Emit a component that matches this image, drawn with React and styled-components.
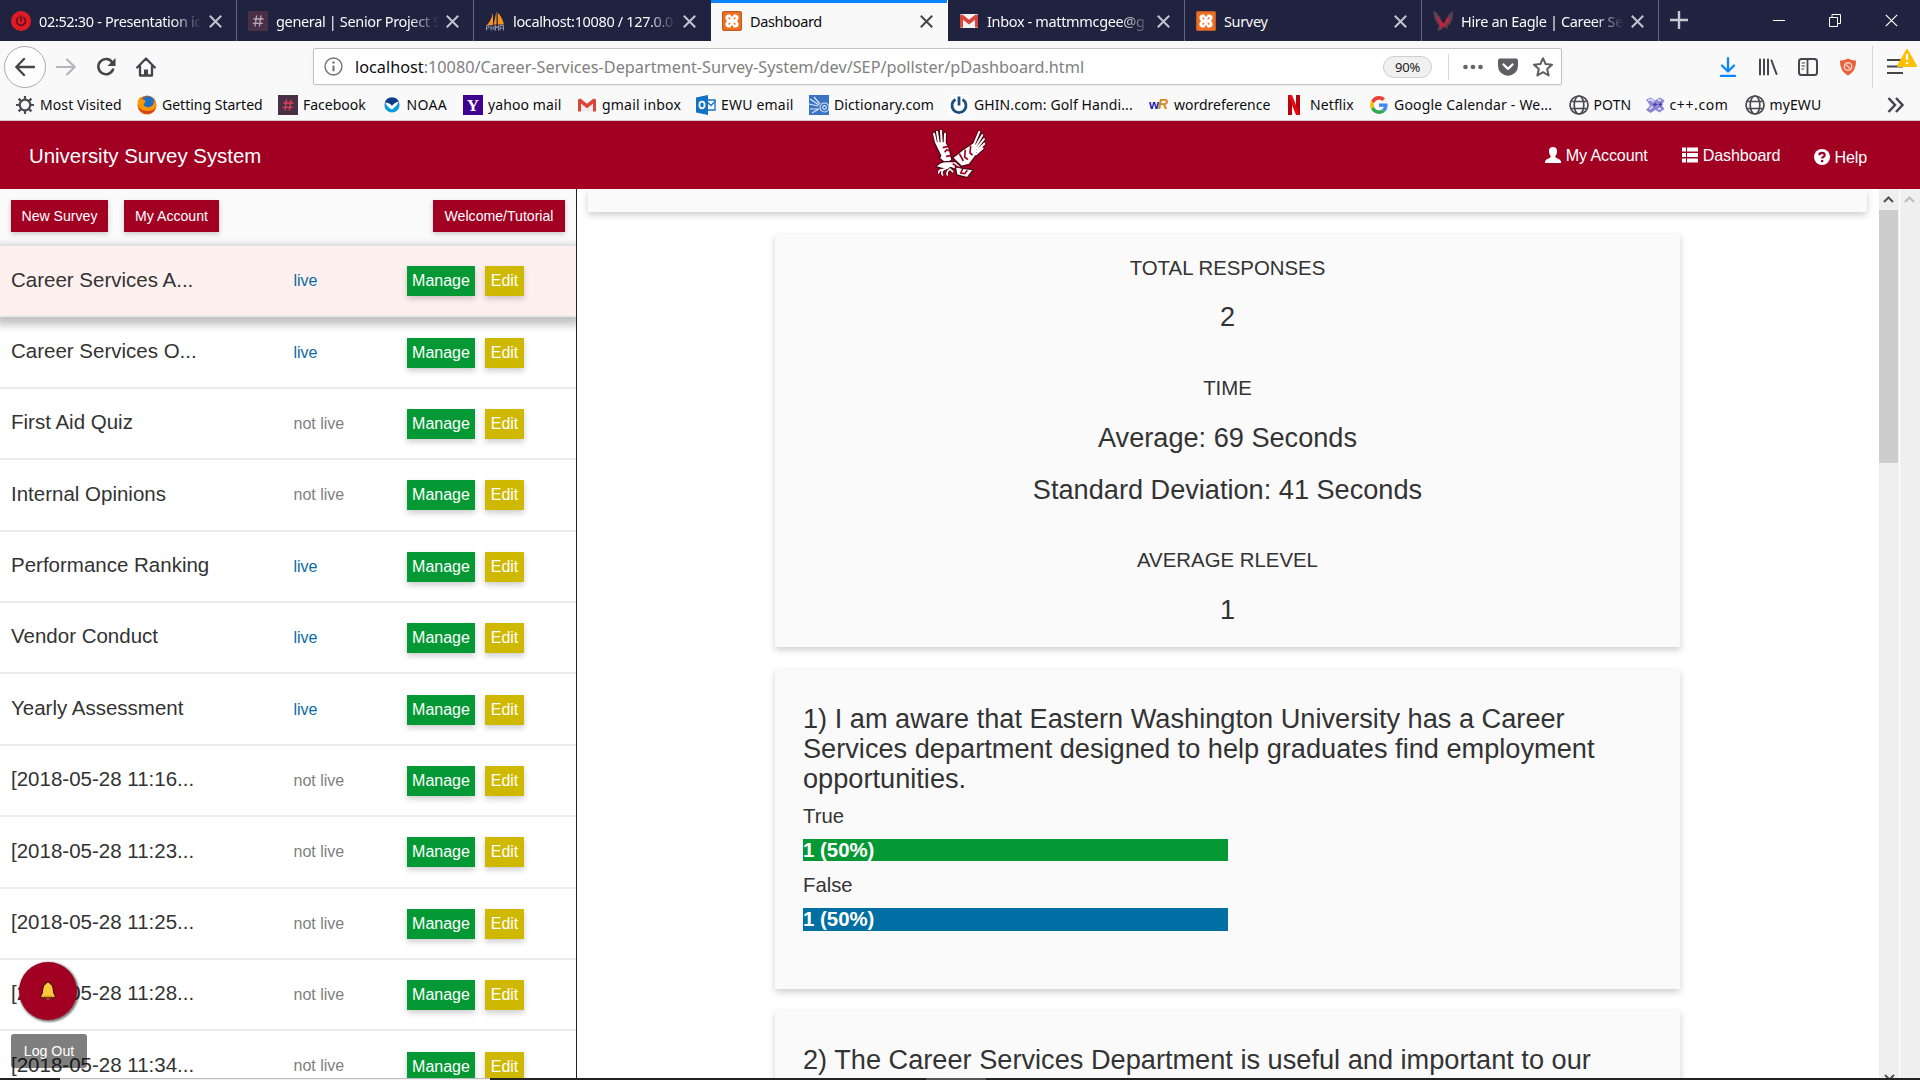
import React from 'react';
import styled, { createGlobalStyle, css } from 'styled-components';

const CRIMSON = '#a10022';
const arial = '"Liberation Sans", Arial, sans-serif';
const ui = '"Noto Sans", "Open Sans", sans-serif';

const Global = createGlobalStyle`
  *, *::before, *::after { box-sizing: border-box; }
  html, body { margin: 0; padding: 0; }
  body { width: 1920px; height: 1080px; overflow: hidden; background: #fff; font-family: ${arial}; color: #333; }
  svg { display: block; flex: none; }
`;

const Screen = styled.div`
  width: 1920px; height: 1080px; display: flex; flex-direction: column; overflow: hidden; background: #fff;
`;

/* ---------- browser chrome ---------- */
const TabStrip = styled.div`
  height: 41px; flex: none; display: flex; background: #202340; font-family: ${ui};
`;
const Tab = styled.div`
  width: 237px; flex: none; height: 41px; display: flex; align-items: center;
  padding: 1px 14px 0 11px;
  color: ${p => (p.$active ? '#0c0c0d' : '#f9f9fa')};
  background: ${p => (p.$active ? '#f9f9fa' : 'transparent')};
  ${p => p.$active && css`box-shadow: inset 0 3px 0 #0a84ff;`}
  border-right: 1px solid ${p => (p.$line ? '#63657a' : 'transparent')};
`;
const TabTitle = styled.div`
  flex: 1; margin-left: 8px; margin-right: 7px; font-size: 14.5px; line-height: 24px; overflow: hidden; white-space: nowrap;
  letter-spacing: -0.35px;
  ${p => p.$fade && css`mask-image: linear-gradient(to right, #000 82%, transparent 100%);`}
`;
const StripTools = styled.div`
  flex: 1; min-width: 0; display: flex; align-items: center; justify-content: space-between;
  padding: 0 22px 1px 11px; color: #fff;
`;
const WindowButtons = styled.div`display: flex; align-items: center; gap: 44px;`;
const Spacer = styled.div`flex: 1;`;
const NavBar = styled.div`
  height: 51px; flex: none; display: flex; align-items: center; padding: 0 5px 0 4px; background: #f9f9fa; font-family: ${ui};
`;
const BackButton = styled.div`
  width: 42px; height: 42px; border-radius: 50%; border: 1px solid #adadad; background: #fdfdfd;
  display: flex; align-items: center; justify-content: center; color: #45454a;
`;
const NavIcons = styled.div`
  display: flex; align-items: center; gap: 20px; margin-left: 10px; width: 257px;
`;
const UrlBar = styled.div`
  width: 1249px; height: 37px; display: flex; align-items: center; background: #fff;
  border: 1px solid #c3c3c3; border-radius: 2px; box-shadow: 0 1px 3px rgba(0,0,0,.06);
  padding: 0 8px 0 10px;
`;
const UrlText = styled.div`
  flex: 1; margin-left: 12px; font-size: 16.25px; line-height: 30px; color: #808080; white-space: nowrap;
  b { font-weight: 400; color: #0c0c0d; }
`;
const ZoomPill = styled.div`
  width: 49px; height: 22px; border-radius: 11px; border: 1px solid #cfcfcf; background: #f0f0f0; margin-right: 2px;
  font-size: 13px; line-height: 20px; text-align: center; color: #1c1c1e; letter-spacing: -0.2px;
`;
const VLine = styled.div`width: 1px; height: ${p => p.$h}px; background: #d7d7db; margin: 0 14px;`;
const UrlActions = styled.div`display: flex; align-items: center; gap: 15px;`;
const RightTools = styled.div`
  flex: 1; display: flex; align-items: center; justify-content: flex-end; color: #45454a;
`;
const ToolGroup = styled.div`display: flex; align-items: center; gap: 20px;`;
const MenuButton = styled.div`position: relative; width: 28px; height: 42px; display: flex; align-items: center;`;
const Warn = styled.svg`position: absolute; top: 3px; left: 10px;`;

const Bookmarks = styled.div`
  height: 29px; flex: none; display: flex; align-items: center; padding: 0 0 2px 15px; background: #f9f9fa;
  border-bottom: 1px solid #cfcfcf; font-family: ${ui};
`;
const Bookmark = styled.div`
  width: ${p => p.$w}px; flex: none; display: flex; align-items: center; gap: 5px; white-space: nowrap;
  font-size: 14px; line-height: 22px; color: #0c0c0d; letter-spacing: ${p => p.$ls || 0}px;
`;

/* ---------- page header ---------- */
const Header = styled.header`
  height: 68px; flex: none; background: ${CRIMSON}; color: #fff; display: grid; align-items: center;
  grid-template-columns: 1fr 60px 1fr; padding: 0 53px 0 29px;
`;
const Brand = styled.div`font-size: 20.4px; line-height: 24px; padding-top: 1px;`;
const Logo = styled.div`margin-left: 14px; margin-top: -3px;`;
const Links = styled.nav`
  display: flex; justify-content: flex-end; gap: 34px; font-size: 16.1px; line-height: 20px; letter-spacing: -0.12px;
`;
const Link = styled.div`
  display: flex; align-items: center; gap: ${p => (p.$low ? 4 : 5)}px; margin-top: ${p => (p.$low ? 3 : -1)}px;
`;

/* ---------- body ---------- */
const Body = styled.div`height: 889px; flex: none; display: flex; overflow: hidden;`;
const Side = styled.aside`width: 577px; flex: none; border-right: 1px solid #222; height: 100%; overflow: hidden;`;
const SideBar = styled.div`
  height: 57px; background: #fafafa; padding: 11px 11px 0; display: flex; align-items: flex-start;
`;
const RedButton = styled.button`
  height: 32px; width: ${p => p.$w}px; margin-right: ${p => p.$mr || 0}px; border: 0; padding: 0; background: ${CRIMSON}; color: #fff;
  font: 14.1px/32px ${arial}; white-space: nowrap;
  box-shadow: 0 2px 5px rgba(0,0,0,.2);
`;
const Row = styled.div`
  position: relative; height: 71.4px; display: grid; grid-template-columns: 282.5px 113.5px 78px 1fr; align-items: start;
  padding-left: 11px; border-bottom: 2px solid #ebebeb; background: ${p => (p.$active ? '#fff0f0' : '#fff')};
  ${p => p.$active && css`z-index: 1; box-shadow: 0 4px 8px 4px rgba(0,0,0,.24);`}
`;
const RowTitle = styled.div`font-size: 20.5px; line-height: 24px; margin-top: 21.5px;`;
const Status = styled.div`
  font-size: 16px; line-height: 20px; margin-top: 25.2px; color: ${p => (p.$live ? '#0b6ba3' : '#808080')};
`;
const Action = styled.button`
  height: 30px; width: ${p => p.$w}px; margin-top: 20.3px; border: 0; padding: 0; color: #fff; background: ${p => p.$bg};
  font: 16px/30px ${arial}; box-shadow: 0 3px 6px rgba(0,0,0,.2);
`;

const Main = styled.main`
  flex: 1; min-width: 0; display: flex; flex-direction: column; align-items: center; overflow: hidden; padding-right: 1px;
`;
const shadow = css`box-shadow: 0 3px 7px rgba(0,0,0,.2);`;
const Strip = styled.div`width: 1279px; height: 23px; flex: none; background: #fafafa; margin-bottom: 22px; ${shadow}`;
const Card = styled.section`
  width: 905px; height: ${p => p.$h}px; flex: none; background: #fafafa; margin-bottom: ${p => p.$mb || 22}px; ${shadow}
`;
const Stats = styled(Card)`display: flex; flex-direction: column; align-items: center; padding-top: 21px;`;
const StatLabel = styled.div`font-size: 20.4px; line-height: 26px; margin-top: ${p => p.$mt || 0}px;`;
const StatValue = styled.div`font-size: 27.15px; line-height: 30px; margin-top: ${p => p.$mt || 21}px;`;
const Question = styled(Card)`padding: 34px 28px 0;`;
const QTitle = styled.h2`margin: 0; font-size: 27.18px; line-height: 30px; font-weight: 400; width: 820px;`;
const Answer = styled.div`font-size: 20.3px; line-height: 24px; margin-top: ${p => p.$mt}px;`;
const Bar = styled.div`
  height: ${p => p.$h}px; margin-top: 11px; background: ${p => p.$bg}; color: #fff;
  font-size: 20.4px; font-weight: 700; line-height: 23px;
`;

const Scroll = styled.div`
  width: ${p => p.$w}px; flex: none; background: #efefef; margin-left: ${p => p.$ml || 0}px; color: ${p => p.$c};
  display: flex; flex-direction: column; align-items: center; justify-content: space-between;
`;
const ScrollTop = styled.div`
  width: 19px; height: 274px; display: flex; flex-direction: column; align-items: center; padding-top: 7px; align-self: flex-start;
`;
const ScrollEnd = styled.div`height: 4px;`;
const Thumb = styled.div`width: 19px; height: 253px; background: #cdcdcd; margin-top: 7px;`;
const TaskEdge = styled.div`height: 2px; flex: none; display: flex; background: #222; position: relative;`;
const EdgePart = styled.div`width: ${p => p.$w}px; background: ${p => p.$bg};`;

const Bell = styled.div`
  position: absolute; left: 19px; top: 962px; width: 58px; height: 58px; border-radius: 50%; background: ${CRIMSON};
  box-shadow: 1px 1px 2px 1px rgba(0,0,0,.5); display: flex; align-items: center; justify-content: center; z-index: 3;
`;
const LogOut = styled.div`
  position: absolute; left: 11px; top: 1034px; width: 76px; height: 34px; border-radius: 3px; background: rgba(0,0,0,.5);
  color: #fff; font-size: 14.2px; line-height: 34px; text-align: center; z-index: 3;
`;

/* ---------- icons ---------- */
const Close = ({ s = 13, c = '#d0d0d8', w = 2 }) => (
  <svg width={s} height={s} viewBox="0 0 13 13" stroke={c} strokeWidth={w} fill="none"><path d="M.8.8l11.4 11.4M12.2.8L.8 12.2" /></svg>
);
const Box = ({ children, s = 20, v = 20 }) => <svg width={s} height={s} viewBox={`0 0 ${v} ${v}`}>{children}</svg>;
const GlyphText = styled.text`font-family: ${p => p.$f || arial}; font-weight: ${p => p.$b || 400};`;

const PowerIcon = () => (
  <Box><circle cx="10" cy="10" r="10" fill="#e01b24" /><g stroke="#5b1020" strokeWidth="1.6" fill="none" strokeLinecap="round"><path d="M7.2 6.6a4.4 4.4 0 1 0 5.6 0M10 5v5" /></g></Box>
);
const HashIcon = ({ c }) => (
  <Box><rect width="20" height="20" fill="#4a3047" /><g stroke={c} strokeWidth="1.3"><path d="M8.6 4.5L7 15.5M13 4.5l-1.6 11M5.5 8h10M4.8 12.3h10" /></g></Box>
);
const PmaIcon = () => (
  <Box><path d="M8 2v12H2q4-4 6-12zM11.500 0v13.500H8.800zM12.800 1.500q4.500 5 6.200 12h-6.200z" fill="#f7941d" /><path d="M1.500 19.500v-5h2.500v2.500H1.500m4.500 2.500v-5m0 2.500h3m0-2.500v5m1.500 0v-5l1.500 2.500 1.500-2.500v5m1.500 0v-5h3.500v5m-3.500-2.500h3.500" stroke="#8f91ab" fill="none" strokeWidth="1" /></Box>
);
const XamppIcon = () => (
  <Box>
    <rect width="20" height="20" rx="2" fill="#ee7022" /><rect x=".6" y=".6" width="18.800" height="18.800" rx="1.500" fill="none" stroke="#b85a28" strokeWidth="1" />
    <path d="M6.500 3.500h1.700L10 6l1.800-2.500h1.700a3.300 3.300 0 0 1 2.300 5.500L15 10l.8 1a3.300 3.300 0 0 1-2.300 5.500h-1.700L10 14l-1.800 2.500H6.500A3.300 3.300 0 0 1 4.200 11L5 10l-.8-1a3.300 3.300 0 0 1 2.300-5.500z" fill="#fff" />
    <path d="M6.300 6.200h1.200l1.300 2H6.800zM13.700 6.200h-1.200l-1.300 2h2zM6.300 13.800h1.200l1.300-2H6.800zM13.700 13.800h-1.200l-1.300-2h2z" fill="#ee7022" />
  </Box>
);
const GmailIcon = ({ plain }) => (
  <Box>{!plain && <rect x="1" y="3" width="18" height="14" rx="1.500" fill="#f2f2f2" />}<path d="M1 4.500v12h3V8.800l6 4.700 6-4.700v7.700h3v-12l-2.500-1L10 8.800 3.500 3.500z" fill="#d9453a" />{plain && <path d="M4 16.500V8.800l6 4.700 6-4.700v7.700z" fill="#eceaea" />}</Box>
);
const EagleTab = () => (
  <Box><path d="M0 0l3 1 4 5 2 5 3 1 2-5 2-4 4-3-.5 8-2.500 5-2.500 2 .5 3-4-2-3 3-4 1 2-5-4-6z" fill="#57414d" /><path d="M2.500 4l4 4 3 4 2 1 1.500-5 3.500-3-1 6-3 3 1 3-3.500-2-4 3 1-4z" fill="#c9203d" /></Box>
);
const Gear = () => (
  <Box><g stroke="#4a4a4f" fill="none"><circle cx="10" cy="10" r="5.300" strokeWidth="2.200" /><path d="M10 1v3.500M10 15.500V19M1 10h3.500M15.500 10H19M3.600 3.600l2.500 2.500M13.900 13.900l2.500 2.500M3.600 16.400l2.500-2.500M13.900 6.100l2.500-2.500" strokeWidth="2.200" /></g></Box>
);
const FirefoxIcon = () => (
  <Box><circle cx="10" cy="10" r="9.500" fill="#e66000" /><circle cx="11" cy="8" r="6.800" fill="#1f6fc4" /><path d="M.6 7q1-4 3-5 .5 2 2.500 2.500 2 .5 2.500 2l-2 2.500q1 4 6 3 5-1 4-7 4 4 1.500 9-3 5-8 5-8-.500-9.500-12z" fill="#ff9500" /><path d="M1 12q3 7 10 7 6-1 8-7-3 4-8 4-6 0-10-4z" fill="#d9411e" /></Box>
);
const NoaaIcon = () => (
  <Box><circle cx="10" cy="10" r="7.600" fill="#0a9bdc" /><path d="M2.700 8a7.600 7.600 0 0 1 14.600 0L10 12z" fill="#123b86" /><path d="M3 7.500q5 0 7 3.500 2.500-4 7.300-4.500Q14 12 10 14.500 6 13 3 7.500z" fill="#fff" /></Box>
);
const YahooIcon = () => <Box><rect width="20" height="20" fill="#400090" /><GlyphText x="10" y="16" textAnchor="middle" fontSize="17" fill="#fff" $f='"Liberation Serif", serif' $b={700}>Y</GlyphText></Box>;
const OutlookIcon = () => (
  <Box><path d="M10 5h9v10h-9z" fill="#fff" stroke="#1273c4" strokeWidth="1.300" /><path d="M10 6l5 4.500L19.500 6" stroke="#1273c4" fill="none" strokeWidth="1.300" /><path d="M0 2.500L12 0v20L0 17.500z" fill="#1273c4" /><ellipse cx="6" cy="10" rx="2.600" ry="3.300" stroke="#fff" strokeWidth="1.700" fill="none" /></Box>
);
const DictIcon = () => (
  <Box><rect width="20" height="20" fill="#3b73c5" /><g stroke="#d9e6f8" strokeWidth="1.200" fill="none"><path d="M1 4l9 6M5 2l6 7M0 9l9 2M1 14h8M3 18l7-4" /><circle cx="15.500" cy="12.500" r="4.500" /><circle cx="15.500" cy="12.500" r="1.800" /></g></Box>
);
const GhinIcon = () => (
  <Box><rect width="20" height="20" fill="#fff" /><path d="M6.500 4.500a7 7 0 1 0 7 0M10 1.500v9" fill="none" stroke="#1c4f7c" strokeWidth="2.800" /></Box>
);
const WrIcon = () => <Box><GlyphText x="0" y="13.500" fontSize="13" fill="#1b1bb5" $b={700}>w</GlyphText><GlyphText x="9" y="13.500" fontSize="14" fill="#d98a1c" fontStyle="italic" $b={700}>R</GlyphText></Box>;
const NetflixIcon = () => (
  <svg width="17" height="20" viewBox="4 0 17 20"><path d="M4 0h4v20l-4 .500zM12 0h4v20l-4-.500z" fill="#b1060f" /><path d="M4 0h4l8 20h-4z" fill="#e50914" /></svg>
);
const GoogleIcon = () => (
  <svg width="20" height="20" viewBox="-3 -3 54 54"><path fill="#EA4335" d="M24 9.500c3.540 0 6.710 1.220 9.210 3.600l6.850-6.850C35.900 2.380 30.470 0 24 0 14.620 0 6.510 5.380 2.560 13.220l7.980 6.190C12.430 13.720 17.740 9.500 24 9.500z" /><path fill="#4285F4" d="M46.980 24.550c0-1.570-.15-3.090-.38-4.550H24v9.020h12.940c-.58 2.960-2.260 5.480-4.780 7.180l7.730 6c4.510-4.180 7.090-10.360 7.090-17.650z" /><path fill="#FBBC05" d="M10.530 28.590c-.48-1.450-.76-2.990-.76-4.590s.27-3.140.76-4.590l-7.980-6.190C.92 16.460 0 20.120 0 24c0 3.880.92 7.540 2.560 10.780l7.970-6.190z" /><path fill="#34A853" d="M24 48c6.480 0 11.930-2.130 15.890-5.810l-7.730-6c-2.150 1.450-4.920 2.300-8.160 2.300-6.260 0-11.570-4.220-13.470-9.910l-7.980 6.190C6.510 42.620 14.620 48 24 48z" /></svg>
);
const Globe = () => (
  <Box><g fill="none" stroke="#4a4a4f" strokeWidth="1.700"><circle cx="10" cy="10" r="9" /><ellipse cx="10" cy="10" rx="4.800" ry="9" /><path d="M2.500 6.500h15M2.500 13.500h15" strokeWidth="1.500" /></g></Box>
);
const CppIcon = () => (
  <Box><path d="M1 4.500l5-2 4 3 5-3 4.500 3-3 4.500 3 4-5 3.500-4-2.500-5 3-4.500-3 4-4.500z" fill="#8c86d4" /><path d="M3 5.500l3-1 3 2.500M4.500 14l3-2.500M13 5l3 .5M13 14l3-.5" stroke="#dddcf8" strokeWidth="1.800" fill="none" /><path d="M8 9.500h4M13.500 9.500h4M10 7.500v4M15.500 7.500v4" stroke="#4a3aa8" strokeWidth="1.200" /></Box>
);

const BackArrow = () => (
  <svg width="20" height="20" viewBox="0 0 20 20" fill="none" stroke="#45454a" strokeWidth="2.400" strokeLinecap="round" strokeLinejoin="round"><path d="M19 10H1.500M9 2L1.300 10 9 18" /></svg>
);
const FwdArrow = () => (
  <svg width="20" height="20" viewBox="0 0 20 20" fill="none" stroke="#b6b6b8" strokeWidth="2.200" strokeLinecap="round" strokeLinejoin="round"><path d="M1 10h17.500M11 2.500l7.700 7.500-7.700 7.500" /></svg>
);
const Reload = () => (
  <Box><path d="M16.200 5.300A7.600 7.600 0 1 0 17 12.500" fill="none" stroke="#45454a" strokeWidth="2.600" strokeLinecap="round" /><path d="M19.500 1v8h-8z" fill="#45454a" /></Box>
);
const Home = () => (
  <Box><path d="M1.200 10.500L10 1.500l8.800 9M4 9.500v9h12v-9" fill="none" stroke="#45454a" strokeWidth="2.300" strokeLinecap="round" strokeLinejoin="round" /><path d="M8 19v-6.500h4V19" fill="#45454a" /></Box>
);
const Info = () => (
  <Box s={19}><circle cx="10" cy="10" r="8.900" fill="none" stroke="#737373" strokeWidth="1.500" /><path d="M10 9v6" stroke="#737373" strokeWidth="2.200" /><circle cx="10" cy="5.800" r="1.300" fill="#737373" /></Box>
);
const Dots = () => <Box><g fill="#666"><circle cx="2.500" cy="10" r="2.300" /><circle cx="10" cy="10" r="2.300" /><circle cx="17.500" cy="10" r="2.300" /></g></Box>;
const Pocket = () => (
  <Box><path d="M2 1.500h16a2 2 0 0 1 2 2V9a10 9.700 0 0 1-20 0V3.500a2 2 0 0 1 2-2z" fill="#5f5f63" /><path d="M5.500 7.500L10 11.800l4.500-4.300" fill="none" stroke="#fff" strokeWidth="2.300" strokeLinecap="round" strokeLinejoin="round" /></Box>
);
const Star = () => (
  <Box><path d="M10 1.200l2.600 5.800 6.400.7-4.800 4.300 1.400 6.500L10 15.200 4.400 18.500l1.400-6.500L1 7.700l6.400-.7z" fill="none" stroke="#5f5f63" strokeWidth="2" strokeLinejoin="round" /></Box>
);
const Download = () => (
  <Box><g stroke="#0a84ff" strokeWidth="2.300" fill="none" strokeLinecap="round" strokeLinejoin="round"><path d="M10 1.200v13M4 8.500l6 6 6-6M3 19h14" /></g></Box>
);
const Library = () => <Box><g stroke="#45454a" strokeWidth="2" strokeLinecap="round"><path d="M2 2.500v15M6 2.500v15M10 2.500v15M13.500 3.500l5 13.500" /></g></Box>;
const SidebarIcon = () => (
  <Box><rect x="1" y="2" width="18" height="16" rx="2.500" fill="none" stroke="#45454a" strokeWidth="2" /><path d="M9.500 2v16" stroke="#45454a" strokeWidth="1.800" /><path d="M3.500 6h3.500M3.500 9h3.500M3.500 12h2.500" stroke="#45454a" strokeWidth="1.200" /></Box>
);
const Shield = () => (
  <Box><path d="M10 1.500q4 2.200 8 2 .5 10.500-8 15Q1.500 14 2 3.500q4 .2 8-2z" fill="#e8603c" /><circle cx="10" cy="9.600" r="3.800" fill="none" stroke="#fbd3c6" strokeWidth="1.400" /><path d="M7.500 7.200l5 4.800" stroke="#fbd3c6" strokeWidth="1.400" /></Box>
);

const feathers = 'M12 40L6 14M20 40L15 8M29 40L27 5M38 42L39 14M126 46L142 8M132 50L151 18M134 58L156 30M134 66L157 44M132 76L152 58';
const talons = 'M48 116L34 122Q20 122 20 132M34 122Q26 132 32 138M52 122Q42 130 46 138M54 120L62 128';
const EagleLogo = () => (
  <svg width="54" height="50" viewBox="0 0 162 150" strokeLinejoin="round" strokeLinecap="round" fill="none">
    <path d={feathers} stroke="#4d0512" strokeWidth="11" />
    <path d={talons} stroke="#4d0512" strokeWidth="9" />
    <g fill="#fff" stroke="#4d0512" strokeWidth="4">
      <path d="M6 38L42 38 52 60 60 94 40 102 22 88 26 80z" />
      <path d="M62 86L98 58 128 38 136 54 134 76 112 106 88 112z" />
      <path d="M12 114Q22 98 44 98L72 98 90 116 74 122 56 116Q42 126 30 118z" />
      <path d="M70 112L92 118 124 122 106 146 74 138z" />
    </g>
    <path d={feathers} stroke="#fff" strokeWidth="6" />
    <path d={talons} stroke="#fff" strokeWidth="5" />
    <g stroke={CRIMSON} strokeWidth="5" strokeLinecap="butt">
      <path d="M32 56L50 52M38 70L44 62 54 66M42 82L58 80" />
      <path d="M82 74L94 96M100 62L98 84 108 92M116 50L114 72 122 78" />
      <path d="M92 120L86 132 98 134 106 124M62 104L80 116" />
    </g>
  </svg>
);
const UserIcon = () => (
  <svg width="16" height="16" viewBox="0 0 16 16" fill="#fff"><path d="M8 0q4 0 4 4.200 0 3.300-1.700 5 0 1.300.9 1.700Q16 12.500 16 14.500V16H0v-1.500q0-2 4.800-3.600.9-.4.900-1.700Q4 7.500 4 4.200 4 0 8 0z" /></svg>
);
const ListIcon = () => (
  <svg width="16" height="16" viewBox="0 0 16 16" fill="#fff"><path d="M0 .5h4v4H0zM5 .5h11v4H5zM0 6h4v4H0zM5 6h11v4H5zM0 11.500h4v4H0zM5 11.500h11v4H5z" /></svg>
);
const HelpIcon = () => (
  <svg width="16" height="16" viewBox="0 0 16 16"><circle cx="8" cy="8" r="8" fill="#fff" /><path d="M5.300 6.200Q5.400 3.800 8 3.800t2.700 2.200q0 1.300-1.400 2-1.200.6-1.200 1.600" fill="none" stroke={CRIMSON} strokeWidth="2.200" /><path d="M7 11h2.300v2.200H7z" fill={CRIMSON} /></svg>
);
const BellIcon = () => (
  <svg width="16" height="20" viewBox="0 0 16 20"><circle cx="8" cy="17.300" r="2" fill="#8a4b10" /><path d="M8 1q1.500 0 1.700 1.400Q13 3.500 13.200 8q.1 5 1.800 6.500v2H1v-2Q2.700 13 2.800 8 3 3.500 6.300 2.400 6.500 1 8 1z" fill="#ffc83d" stroke="#1c1208" strokeWidth="1" /><path d="M1.500 14.500h13v1.800h-13z" fill="#f59e2c" /></svg>
);
const Chevron = ({ down }) => (
  <svg width="11" height="7" viewBox="0 0 11 7" fill="none" stroke="currentColor" strokeWidth="2"><path d={down ? 'M1 1l4.500 4.500L10 1' : 'M1 6l4.500-4.500L10 6'} /></svg>
);

/* ---------- data ---------- */
const tabs = [
  { icon: <PowerIcon />, title: '02:52:30 - Presentation ic', fade: true, line: true },
  { icon: <HashIcon c="#b9a9b8" />, title: 'general | Senior Project S', fade: true, line: true },
  { icon: <PmaIcon />, title: 'localhost:10080 / 127.0.0', fade: true },
  { icon: <XamppIcon />, title: 'Dashboard', active: true },
  { icon: <GmailIcon />, title: 'Inbox - mattmmcgee@g', fade: true, line: true },
  { icon: <XamppIcon />, title: 'Survey', line: true },
  { icon: <EagleTab />, title: 'Hire an Eagle | Career Se', fade: true, line: true },
];
const bookmarks = [
  [<Gear />, 'Most Visited', 122, 0.1], [<FirefoxIcon />, 'Getting Started', 141], [<HashIcon c="#e0405a" />, 'Facebook', 103.5],
  [<NoaaIcon />, 'NOAA', 81.5, 0.3], [<YahooIcon />, 'yahoo mail', 114, 0.1], [<GmailIcon plain />, 'gmail inbox', 119, 0.2],
  [<OutlookIcon />, 'EWU email', 113, 0.2], [<DictIcon />, 'Dictionary.com', 140, 0.1], [<GhinIcon />, 'GHIN.com: Golf Handi...', 200, 0.1],
  [<WrIcon />, 'wordreference', 139], [<NetflixIcon />, 'Netflix', 81, 0.1], [<GoogleIcon />, 'Google Calendar - We...', 199.5, 0.2],
  [<Globe />, 'POTN', 76, 0.1], [<CppIcon />, 'c++.com', 100, 0.6], [<Globe />, 'myEWU', 142, 0.1],
];
const surveys = [
  ['Career Services A...', true], ['Career Services O...', true], ['First Aid Quiz', false], ['Internal Opinions', false],
  ['Performance Ranking', true], ['Vendor Conduct', true], ['Yearly Assessment', true], ['[2018-05-28 11:16...', false],
  ['[2018-05-28 11:23...', false], ['[2018-05-28 11:25...', false], ['[2018-05-28 11:28...', false], ['[2018-05-28 11:34...', false],
];

export default function App() {
  return (
    <Screen>
      <Global />
      <TabStrip>
        {tabs.map((t, i) => (
          <Tab key={i} $active={t.active} $line={t.line}>
            {t.icon}
            <TabTitle $fade={t.fade}>{t.title}</TabTitle>
            <Close c={t.active ? '#45454a' : '#c3c4cf'} />
          </Tab>
        ))}
        <StripTools>
          <svg width="18" height="18" viewBox="0 0 18 18" stroke="#c8c9d3" strokeWidth="2.400"><path d="M9 0v18M0 9h18" /></svg>
          <WindowButtons>
            <svg width="12" height="13" viewBox="0 0 12 13" stroke="#fff"><path d="M0 6.500h12" /></svg>
            <svg width="12" height="13" viewBox="0 0 12 13" stroke="#fff" fill="none"><path d="M.5 3.500h8v9h-8zM3 3.500V.5h8.500v9H8.500" /></svg>
            <Close c="#fff" w={1.2} />
          </WindowButtons>
        </StripTools>
      </TabStrip>
      <NavBar>
        <BackButton><BackArrow /></BackButton>
        <NavIcons><FwdArrow /><Reload /><Home /></NavIcons>
        <UrlBar>
          <Info />
          <UrlText><b>localhost</b>:10080/Career-Services-Department-Survey-System/dev/SEP/pollster/pDashboard.html</UrlText>
          <ZoomPill>90%</ZoomPill>
          <VLine $h={26} />
          <UrlActions><Dots /><Pocket /><Star /></UrlActions>
        </UrlBar>
        <RightTools>
          <ToolGroup><Download /><Library /><SidebarIcon /><Shield /></ToolGroup>
          <VLine $h={42} />
          <MenuButton>
            <svg width="16" height="17" viewBox="0 0 16 17" stroke="#45454a" strokeWidth="2.200"><path d="M0 2h16M0 8.500h16M0 15h16" /></svg>
            <Warn width="20" height="18" viewBox="0 0 20 18"><path d="M10 1L19 17H1z" fill="#ffbf00" stroke="#ffbf00" strokeWidth="2" strokeLinejoin="round" /><path d="M10 5v6M10 13v2.200" stroke="#fff" strokeWidth="2.200" /></Warn>
          </MenuButton>
        </RightTools>
      </NavBar>
      <Bookmarks>
        {bookmarks.map(([icon, label, w, ls]) => (
          <Bookmark key={label} $w={w} $ls={ls}>{icon}<span>{label}</span></Bookmark>
        ))}
        <svg width="18" height="16" viewBox="0 0 18 16" fill="none" stroke="#45454a" strokeWidth="2.500"><path d="M1.500 1L8 8l-6.500 7M9 1l6.500 7L9 15" /></svg>
      </Bookmarks>

      <Header>
        <Brand>University Survey System</Brand>
        <Logo><EagleLogo /></Logo>
        <Links>
          <Link><UserIcon />My Account</Link>
          <Link><ListIcon />Dashboard</Link>
          <Link $low><HelpIcon />Help</Link>
        </Links>
      </Header>

      <Body>
        <Side>
          <SideBar>
            <RedButton $w={97} $mr={16}>New Survey</RedButton>
            <RedButton $w={95}>My Account</RedButton>
            <Spacer />
            <RedButton $w={132}>Welcome/Tutorial</RedButton>
          </SideBar>
          {surveys.map(([name, live], i) => (
            <Row key={name} $active={i === 0}>
              <RowTitle>{name}</RowTitle>
              <Status $live={live}>{live ? 'live' : 'not live'}</Status>
              <Action $w={68} $bg="#049934">Manage</Action>
              <Action $w={39} $bg="#ceb900">Edit</Action>
            </Row>
          ))}
        </Side>
        <Main>
          <Strip />
          <Stats $h={413} $mb={23}>
            <StatLabel>TOTAL RESPONSES</StatLabel>
            <StatValue>2</StatValue>
            <StatLabel $mt={43}>TIME</StatLabel>
            <StatValue $mt={22}>Average: 69 Seconds</StatValue>
            <StatValue $mt={22}>Standard Deviation: 41 Seconds</StatValue>
            <StatLabel $mt={42}>AVERAGE RLEVEL</StatLabel>
            <StatValue $mt={21.5}>1</StatValue>
          </Stats>
          <Question $h={319}>
            <QTitle>1) I am aware that Eastern Washington University has a Career Services department designed to help graduates find employment opportunities.</QTitle>
            <Answer $mt={10}>True</Answer>
            <Bar $h={22} $bg="#049934" style={{ width: '50%' }}>1 (50%)</Bar>
            <Answer $mt={12}>False</Answer>
            <Bar $h={23} $bg="#006fa3" style={{ width: '50%' }}>1 (50%)</Bar>
          </Question>
          <Question $h={319}>
            <QTitle>2) The Career Services Department is useful and important to our</QTitle>
          </Question>
        </Main>
        <Scroll $w={20} $c="#505050">
          <ScrollTop><Chevron /><Thumb /></ScrollTop>
          <ScrollEnd><Chevron down /></ScrollEnd>
        </Scroll>
        <Scroll $w={20} $ml={1} $c="#bdbdbd">
          <ScrollTop><Chevron /></ScrollTop>
        </Scroll>
      </Body>
      <TaskEdge>
        <EdgePart $w={60} $bg="#222" />
        <EdgePart $w={430} $bg="linear-gradient(#bdbdbd 50%, #f0f0f0 50%)" />
        <EdgePart $w={436} $bg="#222" />
        <EdgePart $w={60} $bg="#555" />
      </TaskEdge>
      <Bell><BellIcon /></Bell>
      <LogOut>Log Out</LogOut>
    </Screen>
  );
}
